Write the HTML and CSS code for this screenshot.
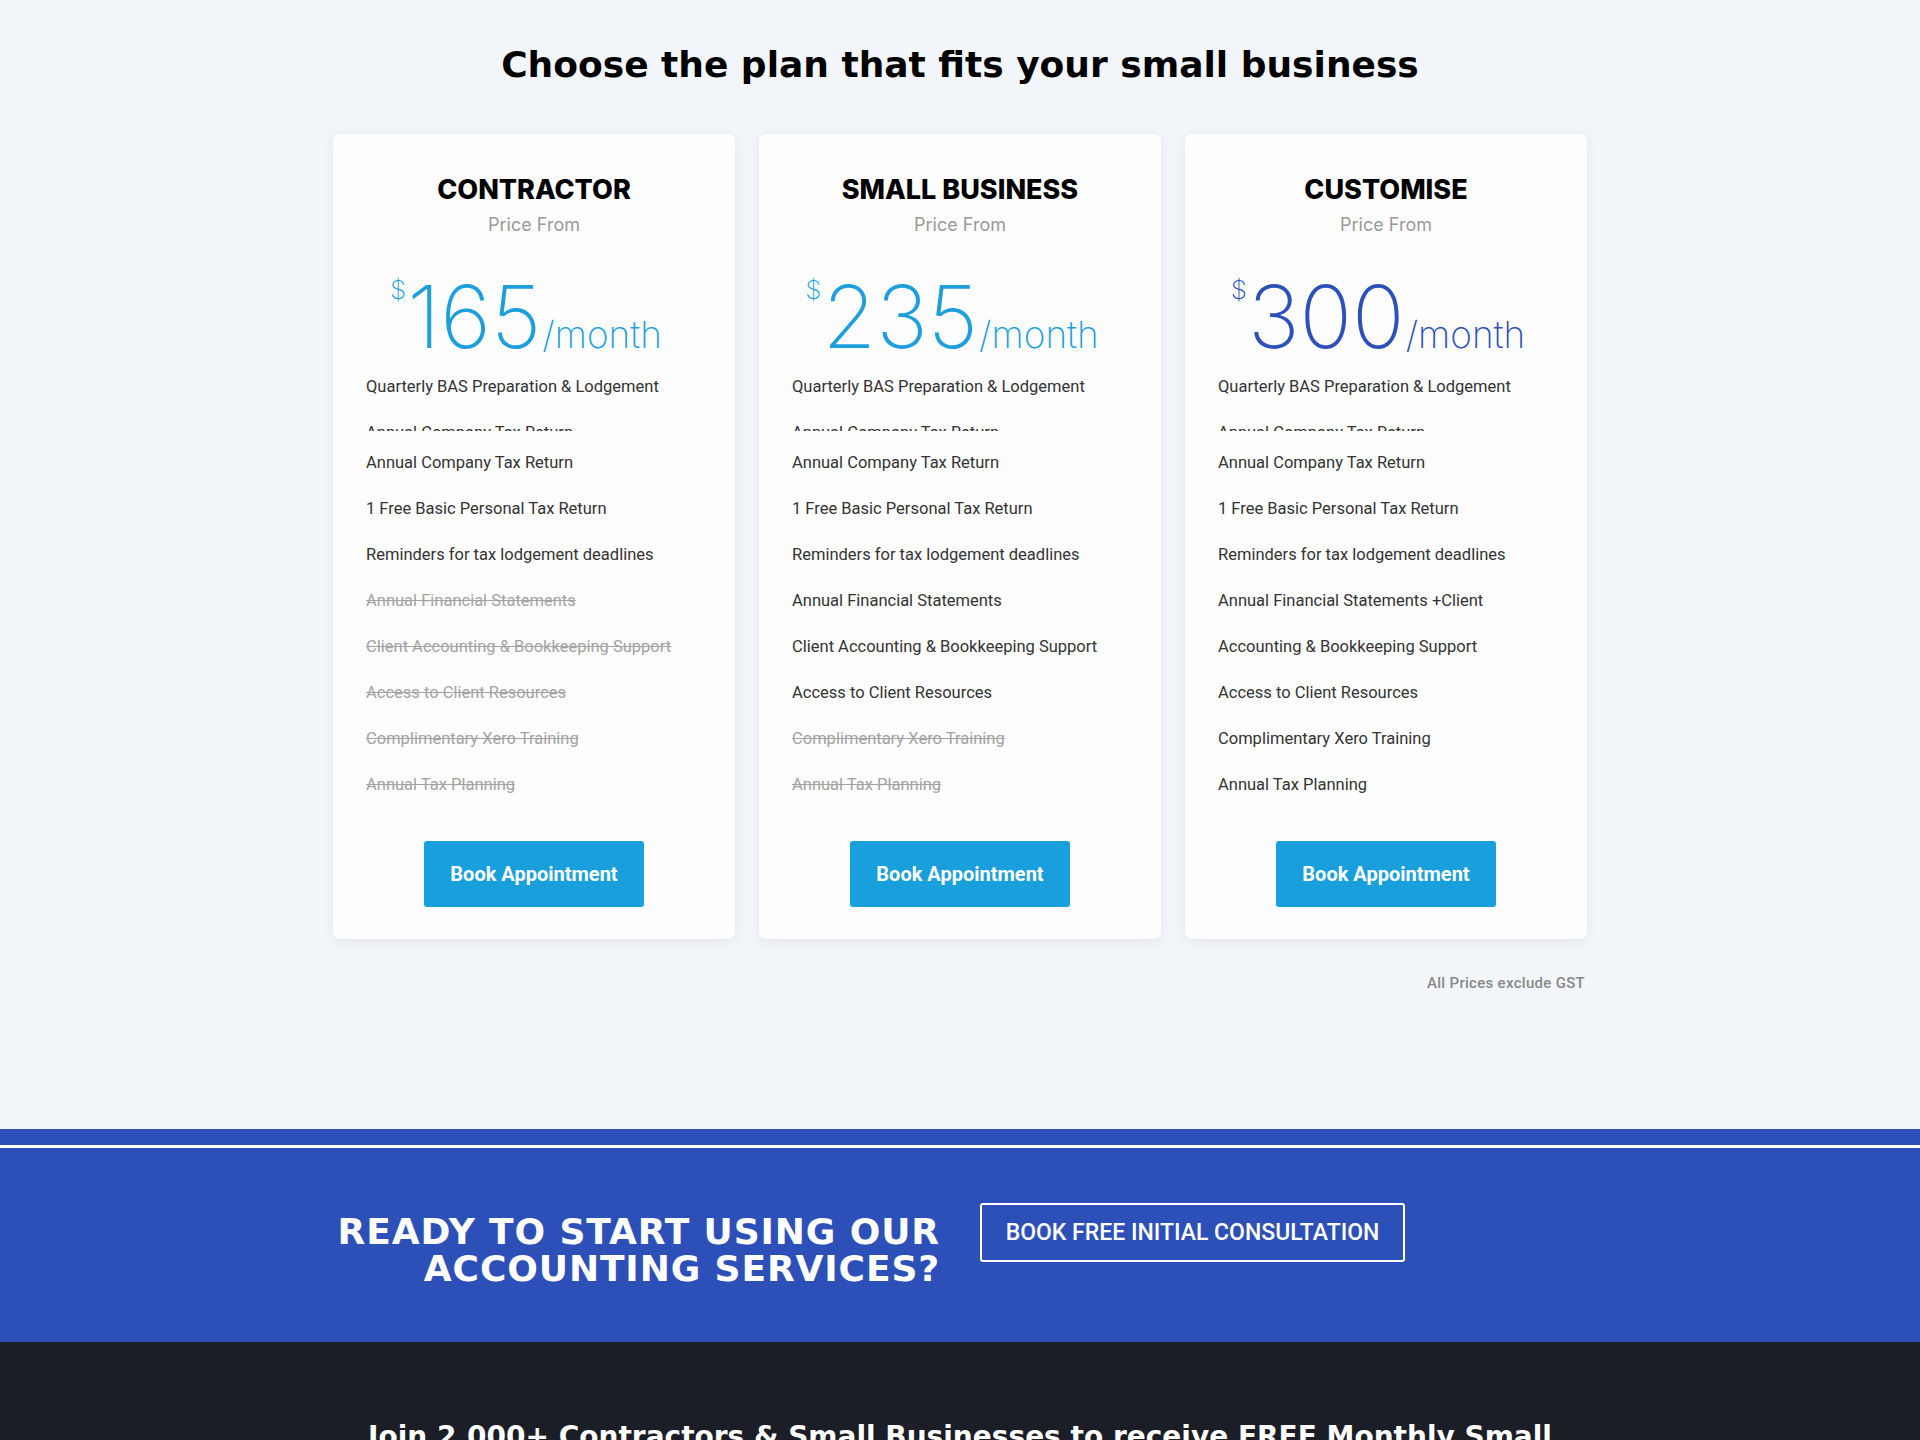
FILE: index.html
```html
<!DOCTYPE html>
<html lang="en">
<head>
<meta charset="utf-8">
<title>Pricing</title>
<link rel="stylesheet" href="styles.css">
</head>
<body>
<section class="pricing">
  <h2 class="pricing-title">Choose the plan that fits your small business</h2>
  <div class="cards">
    <div class="card">
      <h3 class="card-title">CONTRACTOR</h3>
      <p class="card-sub">Price From</p>
      <div class="price price-sky">
        <span class="cur">$</span><span class="amount">165</span><span class="per">/month</span>
      </div>
      <ul class="features">
        <li>Quarterly BAS Preparation &amp; Lodgement</li>
        <li class="clip"><span>Annual Company Tax Return</span></li>
        <li>Annual Company Tax Return</li>
        <li>1 Free Basic Personal Tax Return</li>
        <li>Reminders for tax lodgement deadlines</li>
        <li class="off">Annual Financial Statements</li>
        <li class="off">Client Accounting &amp; Bookkeeping Support</li>
        <li class="off">Access to Client Resources</li>
        <li class="off">Complimentary Xero Training</li>
        <li class="off">Annual Tax Planning</li>
      </ul>
      <a class="btn" href="#">Book Appointment</a>
    </div>
    <div class="card">
      <h3 class="card-title">SMALL BUSINESS</h3>
      <p class="card-sub">Price From</p>
      <div class="price price-sky">
        <span class="cur">$</span><span class="amount">235</span><span class="per">/month</span>
      </div>
      <ul class="features">
        <li>Quarterly BAS Preparation &amp; Lodgement</li>
        <li class="clip"><span>Annual Company Tax Return</span></li>
        <li>Annual Company Tax Return</li>
        <li>1 Free Basic Personal Tax Return</li>
        <li>Reminders for tax lodgement deadlines</li>
        <li>Annual Financial Statements</li>
        <li>Client Accounting &amp; Bookkeeping Support</li>
        <li>Access to Client Resources</li>
        <li class="off">Complimentary Xero Training</li>
        <li class="off">Annual Tax Planning</li>
      </ul>
      <a class="btn" href="#">Book Appointment</a>
    </div>
    <div class="card">
      <h3 class="card-title">CUSTOMISE</h3>
      <p class="card-sub">Price From</p>
      <div class="price price-navy">
        <span class="cur">$</span><span class="amount">300</span><span class="per">/month</span>
      </div>
      <ul class="features">
        <li>Quarterly BAS Preparation &amp; Lodgement</li>
        <li class="clip"><span>Annual Company Tax Return</span></li>
        <li>Annual Company Tax Return</li>
        <li>1 Free Basic Personal Tax Return</li>
        <li>Reminders for tax lodgement deadlines</li>
        <li>Annual Financial Statements +Client</li>
        <li>Accounting &amp; Bookkeeping Support</li>
        <li>Access to Client Resources</li>
        <li>Complimentary Xero Training</li>
        <li>Annual Tax Planning</li>
      </ul>
      <a class="btn" href="#">Book Appointment</a>
    </div>
  </div>
  <p class="note">All Prices exclude GST</p>
</section>

<section class="cta">
  <div class="cta-rule"></div>
  <div class="cta-inner">
    <h2 class="cta-title">READY TO START USING OUR<br>ACCOUNTING SERVICES?</h2>
    <div class="cta-action">
      <a class="cta-btn" href="#">BOOK FREE INITIAL CONSULTATION</a>
    </div>
  </div>
</section>

<section class="newsletter">
  <h2 class="newsletter-title">Join 2,000+ Contractors &amp; Small Businesses to receive FREE Monthly Small<br>Business Tips</h2>
</section>
</body>
</html>
```

FILE: styles.css
```css
* { box-sizing: border-box; }

body {
  margin: 0;
  background: #f2f5f9;
  font-family: "Roboto", "Liberation Sans", sans-serif;
  color: #333;
}

.pricing {
  padding-top: 42px;
  padding-bottom: 136px;
}

.pricing-title {
  margin: 0 0 47px;
  text-align: center;
  font-family: "DejaVu Sans", "Inter", sans-serif;
  font-weight: 700;
  font-size: 36px;
  line-height: 45px;
  color: #000;
}

.cards {
  display: grid;
  grid-template-columns: repeat(3, 402px);
  gap: 24px;
  justify-content: center;
}

.card {
  background: #fdfdfd;
  border-radius: 7px;
  box-shadow: 0 2px 12px rgba(40, 50, 70, 0.08);
  padding: 40px 0 32px;
  display: flex;
  flex-direction: column;
  align-items: stretch;
}

.card-title {
  margin: 0;
  text-align: center;
  font-family: "Inter", "Noto Sans", sans-serif;
  font-weight: 800;
  font-size: 27px;
  line-height: 32px;
  color: #000;
}

.card-sub {
  margin: 7px 0 0;
  text-align: center;
  font-family: "Inter", "Noto Sans", sans-serif;
  font-weight: 400;
  font-size: 18px;
  line-height: 24px;
  color: #9a9a9a;
}

.price {
  margin-top: 36px;
  height: 87px;
  display: flex;
  justify-content: center;
  align-items: baseline;
  padding-right: 16px;
  font-family: "Inter", "Noto Sans", sans-serif;
  font-weight: 200;
}

.price-sky { color: #1d9fde; }
.price-navy { color: #2e50b9; }

.cur {
  align-self: flex-start;
  font-size: 26px;
  line-height: 26px;
  margin-top: 4px;
  margin-right: 1px;
}

.amount {
  font-size: 87px;
  line-height: 87px;
  letter-spacing: 0;
}

.per {
  font-size: 37px;
  line-height: 37px;
  margin-left: 1px;
}

.features {
  list-style: none;
  margin: 4px 0 0;
  padding: 0 10px 0 33px;
}

.features li {
  font-size: 16.5px;
  line-height: 46px;
  height: 46px;
  color: #333;
  white-space: nowrap;
}

.features li.clip {
  height: 30px;
}

.features li.clip span {
  display: block;
  height: 21px;
  overflow: hidden;
}

.features li.off {
  color: #a3a3a3;
  text-decoration: line-through;
}

.btn {
  align-self: center;
  margin-top: 33px;
  width: 220px;
  height: 66px;
  display: flex;
  align-items: center;
  justify-content: center;
  background: #1a9fdd;
  border-radius: 3px;
  color: #fff;
  text-decoration: none;
  font-weight: 700;
  font-size: 20px;
}

.note {
  width: 1254px;
  margin: 34px auto 0;
  padding-right: 2px;
  text-align: right;
  font-size: 15px;
  line-height: 20px;
  font-weight: 500;
  letter-spacing: 0.3px;
  color: #888;
}

.cta {
  background: #2d50b8;
  padding-top: 16px;
  height: 213px;
}

.cta-rule {
  height: 3px;
  background: #fff;
}

.cta-inner {
  width: 1254px;
  margin: 0 auto;
  display: grid;
  grid-template-columns: 1fr 1fr;
  align-items: start;
}

.cta-title {
  margin: 65px 0 0;
  padding-right: 20px;
  text-align: right;
  font-family: "DejaVu Sans", "Inter", sans-serif;
  font-weight: 700;
  font-size: 36px;
  line-height: 37px;
  letter-spacing: 0.9px;
  color: #fff;
}

.cta-action {
  padding-left: 20px;
  padding-top: 55px;
}

.cta-btn {
  display: inline-flex;
  align-items: center;
  justify-content: center;
  width: 425px;
  height: 59px;
  border: 2px solid #fff;
  border-radius: 3px;
  color: #fff;
  text-decoration: none;
  font-weight: 500;
  font-size: 23px;
}

.newsletter {
  background: #1b1e26;
  padding-top: 75px;
  padding-bottom: 60px;
}

.newsletter-title {
  margin: 0;
  text-align: center;
  font-family: "DejaVu Sans", "Inter", sans-serif;
  font-weight: 700;
  font-size: 28px;
  line-height: 40px;
  color: #fff;
}
```
